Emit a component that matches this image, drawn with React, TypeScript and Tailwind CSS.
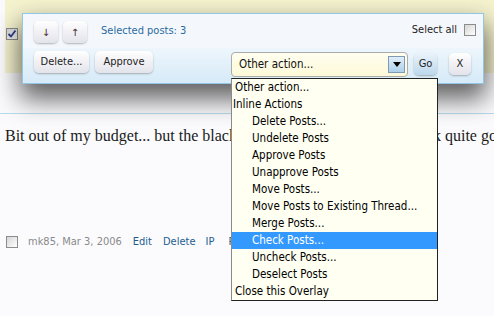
import React from 'react';

const ui = { fontFamily: '"DejaVu Sans Condensed", "DejaVu Sans", sans-serif' };
const serif = { fontFamily: '"Liberation Serif", serif' };

function Box({ checked = false }: { checked?: boolean }) {
  return (
    <div className="w-[12px] h-[12px] border border-[#8c8c8c] bg-linear-to-br from-[#d6d6d6] to-white flex items-center justify-center">
      {checked && (
        <svg width="10" height="10" viewBox="0 0 10 10">
          <path d="M1.5 5 L4 7.5 L8.5 1.5" fill="none" stroke="#2b3d8c" strokeWidth="1.8" />
        </svg>
      )}
    </div>
  );
}

function Btn({ children, w, blue = false }: { children: React.ReactNode; w: string; blue?: boolean }) {
  return (
    <div
      className={`${w} h-[22px] rounded-[5px] flex items-center justify-center text-[11px] text-[#1e1e1e] shadow-[0_1px_2px_rgba(0,0,0,0.28)] bg-linear-to-b ${
        blue ? 'from-[#eaf3fa] to-[#bcd8ed]' : 'from-white to-[#e3e3eb]'
      }`}
    >
      {children}
    </div>
  );
}

const items: { label: string; indent?: boolean; group?: boolean; active?: boolean }[] = [
  { label: 'Other action...' },
  { label: 'Inline Actions', group: true },
  { label: 'Delete Posts...', indent: true },
  { label: 'Undelete Posts', indent: true },
  { label: 'Approve Posts', indent: true },
  { label: 'Unapprove Posts', indent: true },
  { label: 'Move Posts...', indent: true },
  { label: 'Move Posts to Existing Thread...', indent: true },
  { label: 'Merge Posts...', indent: true },
  { label: 'Check Posts...', indent: true, active: true },
  { label: 'Uncheck Posts...', indent: true },
  { label: 'Deselect Posts', indent: true },
  { label: 'Close this Overlay' },
];

export default function App() {
  return (
    <div className="relative w-[494px] h-[316px] overflow-hidden bg-[#fbfbfe]" style={ui}>
      {/* selected post */}
      <div className="h-[73px] ml-[5px] bg-[#f6f4cf] pt-[28px] pl-[1px]">
        <Box checked />
      </div>
      <div className="h-[41px] border-b border-[#b7dbee]"></div>

      <p className="mt-[12px] pl-[5px] text-[16px] leading-[20px] text-[#1a1a1a] whitespace-nowrap" style={serif}>
        Bit out of my budget... but the black one with the red trim does look quite good.
      </p>

      <div className="mt-[88px] h-[16px] pl-[6px] flex items-center text-[11px]">
        <Box />
        <span className="ml-[10px] text-[#8a8a8a]">mk85, Mar 3, 2006</span>
        <span className="ml-[11px] text-[#1d5d8f]">Edit</span>
        <span className="ml-[11px] text-[#1d5d8f]">Delete</span>
        <span className="ml-[10px] text-[#1d5d8f]">IP</span>
        <span className="ml-[14px] text-[#1d5d8f]">Report</span>
      </div>

      {/* inline moderation overlay */}
      <div className="absolute left-[22px] top-[13px] w-[462px] h-[71px] border border-[#93c5e5] shadow-[0_13px_24px_2px_rgba(0,0,0,0.62)] flex flex-col">
        <div className="h-[34px] bg-[#f4f8fc] flex items-start pl-[11px] pr-[6px] pt-[7px]">
          <Btn w="w-[24px]">
            <span className="text-[10px] text-[#4a2c2c]" style={{ fontFamily: '"DejaVu Sans", sans-serif' }}>↓</span>
          </Btn>
          <div className="ml-[5px]">
            <Btn w="w-[24px]">
              <span className="text-[10px] text-[#4a2c2c]" style={{ fontFamily: '"DejaVu Sans", sans-serif' }}>↑</span>
            </Btn>
          </div>
          <span className="ml-[14px] mt-[2px] text-[11px] text-[#2b6aa0]">Selected posts: 3</span>
          <div className="ml-auto flex items-center mt-[1px]">
            <span className="text-[11px] text-[#222]">Select all</span>
            <div className="ml-[7px] mr-[1px]">
              <Box />
            </div>
          </div>
        </div>
        <div className="flex-1 bg-linear-to-b from-[#eef6fc] to-[#d6eaf8] flex items-start pl-[11px] pt-[3px]">
          <Btn w="w-[55px]">Delete...</Btn>
          <div className="ml-[6px]">
            <Btn w="w-[58px]">Approve</Btn>
          </div>
          <div className="ml-[78px] mt-[1px] w-[177px] h-[25px] rounded-[4px] border border-[#ababab] bg-linear-to-b from-[#fffef0] to-[#fdf9d8] flex items-center pl-[7px] pr-[2px] text-[11.5px] text-[#111]">
            <span>Other action...</span>
            <div className="ml-auto w-[17px] h-[17px] border border-[#7d9bb6] bg-linear-to-b from-[#e2eef9] to-[#aed0ec] flex items-center justify-center">
              <svg width="8" height="5" viewBox="0 0 8 5">
                <path d="M0 0 H8 L4 5 Z" fill="#000" />
              </svg>
            </div>
          </div>
          <div className="ml-[6px] mt-[2px]">
            <Btn w="w-[23px]" blue>
              Go
            </Btn>
          </div>
          <div className="ml-[12px] mt-[2px]">
            <Btn w="w-[22px]">X</Btn>
          </div>
        </div>
      </div>

      {/* open select list */}
      <div className="absolute left-[231px] top-[78px] w-[207px] border border-[#222] border-l-[#8a8a8a] bg-[#fffff2] text-[11.5px] text-black">
        {items.map((it) => (
          <div
            key={it.label}
            className={`h-[17px] flex items-center whitespace-nowrap ${it.indent ? 'pl-[20px]' : it.group ? 'pl-[1px]' : 'pl-[3px]'} ${
              it.active ? 'bg-[#3399ff] text-white' : ''
            }`}
          >
            {it.label}
          </div>
        ))}
      </div>
    </div>
  );
}
